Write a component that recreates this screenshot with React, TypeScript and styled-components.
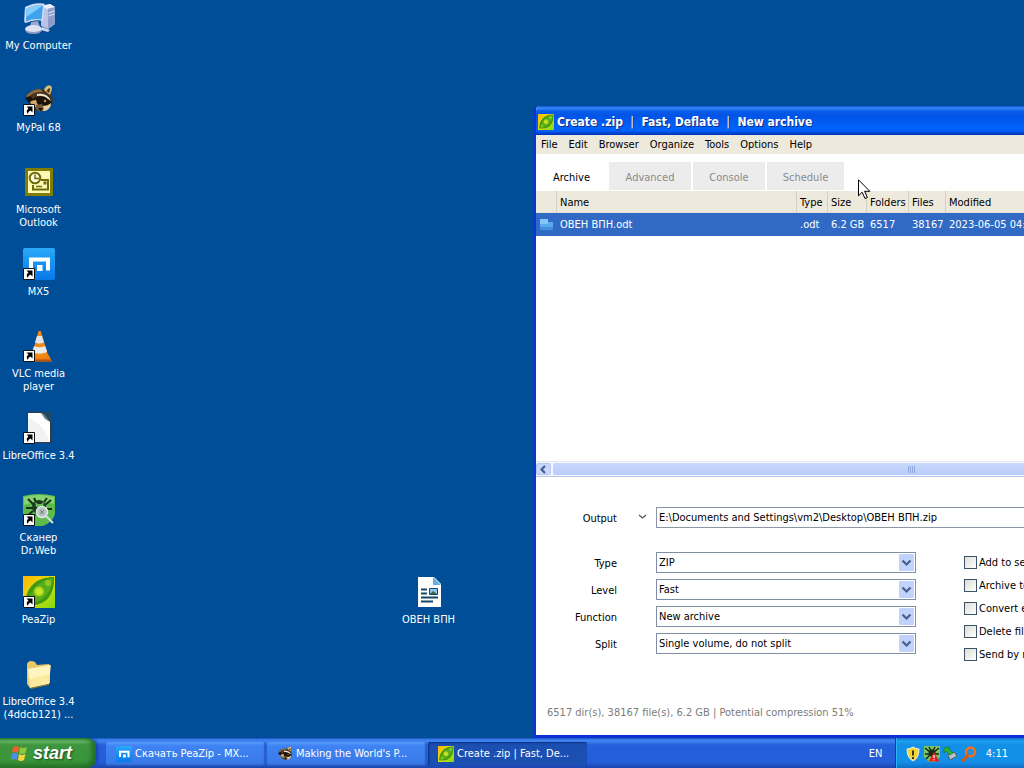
import React from "react";
import styled, { createGlobalStyle } from "styled-components";

const GlobalStyle = createGlobalStyle`
  * { box-sizing: border-box; }
  html, body { margin: 0; height: 100%; }
  body, button, input, select, table {
    font-family: "DejaVu Sans Condensed", "DejaVu Sans", sans-serif;
    font-size: 11px;
    line-height: 13px;
  }
`;

const Screen = styled.div`
  display: flex;
  flex-direction: column;
  height: 100vh;
  overflow: hidden;
  color: #000;
`;

const Desktop = styled.main`
  flex: 1;
  min-height: 0;
  position: relative;
  overflow: hidden;
  background: #004e98;
`;

const IconColumn = styled.div`
  display: grid;
  grid-auto-rows: 82px;
  width: 77px;
`;

const Shortcut = styled.button`
  display: flex;
  flex-direction: column;
  align-items: center;
  gap: 5px;
  width: 77px;
  padding: 2px 0 0;
  border: 0;
  background: none;
  color: #fff;
  white-space: nowrap;
  text-align: center;
  svg { display: block; flex: none; }
`;

const LooseFile = styled.div`
  position: absolute;
  left: 390px;
  top: 574px;
`;

const Window = styled.section`
  position: absolute;
  left: 534px;
  right: -264px;
  top: 106px;
  bottom: 0;
  display: flex;
  flex-direction: column;
  border: solid #0a32d4;
  border-width: 0 2px 3px;
  border-radius: 5px 5px 0 0;
  background: #fff;
  overflow: hidden;
`;

const TitleBar = styled.header`
  display: flex;
  align-items: center;
  gap: 3px;
  height: 29px;
  margin: 0 -2px;
  padding: 2px 0 0 4px;
  background: linear-gradient(#0a4fd0 0, #3a8cf8 2px, #0a5ce8 5px, #0054e6 10px, #0062fb 22px, #0060f8 25px, #0039c0 28px);
`;

const Title = styled.h1`
  margin: 0;
  padding-top: 1px;
  font-size: 12px;
  line-height: 16px;
  font-weight: bold;
  color: #fff;
  text-shadow: 1px 1px #0a2f8a;
  white-space: pre;
`;

const Divider = styled.span`
  padding: 0 4px;
  font-weight: normal;
`;

const MenuBar = styled.nav`
  display: flex;
  align-items: center;
  gap: 11px;
  height: 19px;
  padding-left: 5px;
  background: #ede9dc;
`;

const MenuItem = styled.button`
  padding: 0;
  border: 0;
  background: none;
  color: #000;
`;

const Tabs = styled.div`
  display: flex;
  align-items: flex-end;
  gap: 2px;
  height: 37px;
  padding-bottom: 1px;
`;

const Tab = styled.button<{ $width: number; $active?: boolean }>`
  width: ${(p) => p.$width}px;
  height: 28px;
  padding: 2px 0 0;
  border: 0;
  background: ${(p) => (p.$active ? "#fff" : "#ececed")};
  color: ${(p) => (p.$active ? "#000" : "#8a8a8a")};
`;

const FileList = styled.div`
  flex: 1;
  min-height: 0;
  overflow: hidden;
`;

const FileTable = styled.table`
  width: 100%;
  table-layout: fixed;
  border-collapse: separate;
  border-spacing: 0;
  text-align: left;
  white-space: nowrap;
  th {
    height: 22px;
    padding: 1px 0 0 3px;
    border-left: 1px solid #d3d0c2;
    border-bottom: 1px solid #e3dfcf;
    background: #ede9dc;
    font-weight: normal;
  }
  th:first-child { border-left: 0; }
  td {
    height: 23px;
    padding: 0 0 0 4px;
    background: #316ac5;
    color: #fff;
  }
  svg { display: block; }
`;

const ScrollBar = styled.div`
  display: flex;
  height: 16px;
  gap: 2px;
  padding: 1px 0;
  border-top: 1px solid #e4e9f4;
  border-bottom: 1px solid #b5c6e8;
  background: #f5f7fd;
`;

const ScrollArrow = styled.button`
  display: grid;
  place-items: center;
  width: 15px;
  padding: 0;
  border: 1px solid #b4c8f4;
  border-radius: 2px;
  background: #c8d6fb;
`;

const ScrollThumb = styled.div`
  display: flex;
  align-items: center;
  justify-content: center;
  gap: 1px;
  flex: 1;
  margin-right: 17px;
  border-radius: 2px;
  background: linear-gradient(#c9d8fd, #b9cdf8);
`;

const Grip = styled.i`
  width: 1px;
  height: 7px;
  background: #8fa8dc;
`;

const Options = styled.form`
  display: grid;
  grid-template-columns: 81px 39px 260px 1fr;
  grid-template-rows: 21px;
  row-gap: 24px;
  height: 229px;
  padding-top: 30px;
  align-content: start;
`;

const OutputLabel = styled.label`
  text-align: right;
  line-height: 23px;
`;

const PathMenu = styled.button`
  display: grid;
  place-items: center;
  padding: 0 0 2px 12px;
  border: 0;
  background: none;
`;

const PathInput = styled.input`
  grid-column: span 2;
  height: 21px;
  padding: 0 2px;
  border: 1px solid #8b97a4;
  background: #fff;
  color: #000;
`;

const Fields = styled.div`
  grid-column: 1 / span 3;
  display: flex;
  flex-direction: column;
  gap: 6px;
`;

const Field = styled.div`
  display: grid;
  grid-template-columns: 81px 260px;
  column-gap: 39px;
  height: 21px;
  label {
    text-align: right;
    line-height: 23px;
  }
`;

const SelectBox = styled.div`
  display: grid;
  align-items: center;
  height: 21px;
  border: 1px solid #7f8ea6;
  background: #fff;
  > * { grid-area: 1 / 1; }
  svg {
    justify-self: end;
    margin-right: 1px;
    pointer-events: none;
  }
`;

const Select = styled.select`
  appearance: none;
  height: 19px;
  padding: 0 20px 0 2px;
  border: 0;
  background: none;
  color: #000;
`;

const Checks = styled.div`
  display: flex;
  flex-direction: column;
  gap: 10px;
  padding: 4px 0 0 48px;
`;

const Check = styled.label`
  display: flex;
  align-items: center;
  gap: 2px;
  height: 13px;
  white-space: nowrap;
  input {
    appearance: none;
    flex: none;
    width: 13px;
    height: 13px;
    margin: 0;
    border: 1px solid #3d5368;
    background: linear-gradient(135deg, #dcdcd7, #fff);
  }
`;

const Status = styled.p`
  margin: 0;
  padding: 0 11px 15px;
  line-height: 14px;
  color: #7c7c7c;
`;

const Pointer = styled.svg`
  position: absolute;
  left: 858px;
  top: 179px;
`;

const TaskBar = styled.footer`
  display: flex;
  height: 30px;
  background: linear-gradient(#1c4fc0 0, #3f86f2 2px, #3a7cec 4px, #2560dc 7px, #245edb 24px, #1a45ad 30px);
  color: #fff;
`;

const StartButton = styled.button`
  display: flex;
  align-items: center;
  gap: 4px;
  width: 96px;
  padding: 0 0 0 10px;
  border: 0;
  border-radius: 0 9px 9px 0;
  background: linear-gradient(#2f7a35 0, #62b562 3px, #3e963e 7px, #3a963a 22px, #2a7a2c 30px);
  box-shadow: inset -4px -1px 5px #226a26, 2px 0 3px #1a44b4;
  color: #fff;
  font-family: "Liberation Sans", Arial, sans-serif;
  font-size: 18px;
  line-height: 20px;
  font-weight: bold;
  font-style: italic;
  text-shadow: 1px 1px 2px #17491a;
`;

const Tasks = styled.div`
  display: flex;
  align-items: center;
  gap: 2px;
  flex: 1;
  padding: 1px 0 0 10px;
`;

const Task = styled.button<{ $pressed?: boolean }>`
  display: flex;
  align-items: center;
  gap: 3px;
  width: 159px;
  height: 24px;
  padding: 0 10px;
  border: 0;
  border-radius: 2px;
  background: ${(p) =>
    p.$pressed ? "#1c4fb2" : "linear-gradient(#5b9bfb 0, #3e82f3 4px, #3a7bea 20px, #3069d2)"};
  box-shadow: ${(p) => (p.$pressed ? "inset 1px 1px 2px #0d3280" : "inset -1px -1px 1px #2a5cc0")};
  color: #fff;
  white-space: nowrap;
  svg { flex: none; }
`;

const Language = styled.button`
  width: 39px;
  padding: 0;
  border: 0;
  background: none;
  color: #fff;
`;

const Tray = styled.div`
  display: flex;
  align-items: center;
  gap: 3px;
  width: 129px;
  padding: 1px 16px 0 9px;
  border-left: 1px solid #0b3f9f;
  background: linear-gradient(#0d6fd0 0, #1fa0f0 3px, #1290e6 7px, #138fe8 24px, #0e6fc4 30px);
  box-shadow: inset 1px 0 #2bb3f6;
  svg { flex: none; }
  time { margin-left: auto; }
`;

const Arrow = () => (
  <g>
    <path d="M.5 20.500h11v11H.5z" fill="#fff" stroke="#111" />
    <path d="M3.500 22.500h6v6l-2-2c-2 1-2.500 2-2.500 3.500-2-2-1.500-4 .5-5.500z" fill="#000" />
  </g>
);

const Svg = ({ size = 32, box = 32, children }: { size?: number; box?: number; children: React.ReactNode }) => (
  <svg width={size} height={size} viewBox={`0 0 ${box} ${box}`} aria-hidden="true">
    {children}
  </svg>
);

const ComputerArt = () => (
  <>
    <path d="M18 4l9-2 5 3v17l-7 5-7-3z" fill="#b9c3e6" />
    <path d="M18 4l9-2 5 3-8 2z" fill="#eef1fb" />
    <path d="M25 7l7-2v17l-7 5z" fill="#8f9dcc" />
    <path d="M25.500 11l6-2M25.500 14l6-2" stroke="#dfe5f8" />
    <path d="M2 5Q11 0 20.500 1.500q1.500 0 1.300 1.500L20 19q-9-2-17 2-2 0-1.800-3z" fill="#d4daf0" />
    <path d="M3.500 6.500Q11 2.500 20 3.500L18.500 17.500Q10.500 16 3 19.500z" fill="#3ea2ef" />
    <path d="M3.500 6.500Q11 2.500 20 3.500L3.200 15z" fill="#86cdfb" />
    <path d="M8 20l7-1 2 6H7z" fill="#9ba6cf" />
    <ellipse cx="10.500" cy="27" rx="8.500" ry="4" fill="#dfe3f4" />
    <path d="M2 28q8 4 17 0-1 4-8.500 4T2 28z" fill="#8e99c4" />
    <path d="M19 25l8 3-2 2-7-2z" fill="#cfd5ec" />
  </>
);

const RaccoonArt = () => (
  <>
    <path d="M3 12C8 5 16 4 22 6c1-3 4-5 6-4 2 2 1 5 0 8 3 5 2 11-3 15-5 3-13 3-16-2z" fill="#4a3420" />
    <path d="M3 12q6-7 14-7l3 3Q9 7 5 14z" fill="#8a6b42" />
    <path d="M21 6c1-3 4-6 7-4 2 2 0 6-1 9z" fill="#d9bd7c" />
    <path d="M23.500 7q2-3 3.500-3 0 3-1 5z" fill="#4a3018" />
    <path d="M2 14l5-2 4 4-5 3z" fill="#1a130c" />
    <path d="M9 16q8-7 17-1l3 4q-4 4-9 2l-5 3z" fill="#1c150e" />
    <path d="M14 10q10-2 14 7l-3-2q-4-4-11-3z" fill="#f3ead2" />
    <path d="M7 18q3-3 6-1l2 4-4 3z" fill="#cfa768" />
    <path d="M20 22q5 0 8-3 0 6-6 8-4 0-5-3z" fill="#e8cf9c" />
    <path d="M13 21l6-1 2 5-4 3-4-3z" fill="#7b5a34" />
    <circle cx="12.500" cy="17" r="1" fill="#e9b35a" />
    <circle cx="22" cy="17" r="1.200" fill="#d99b45" />
    <path d="M15 24h5l-2.500 3.500z" fill="#111" />
  </>
);

const OutlookArt = () => (
  <>
    <path d="M2 2h28v28H2z" fill="#7f7c08" />
    <path d="M5 5h22v22H5z" fill="#fdf9b4" />
    <circle cx="12" cy="12" r="5.300" fill="#fffde0" stroke="#6f6b0a" strokeWidth="2" />
    <path d="M12 8.500V12.500h4" fill="none" stroke="#6f6b0a" strokeWidth="1.500" />
    <path d="M18 14h7v9.500H10V19" fill="none" stroke="#6f6b0a" strokeWidth="2" />
    <path d="M13 20.500h6" stroke="#6f6b0a" strokeWidth="1.500" />
    <path d="M20.500 15.500h3v3h-3z" fill="#6f6b0a" />
  </>
);

const MaxthonArt = () => (
  <>
    <defs>
      <linearGradient id="mx" x2="0" y2="1">
        <stop stopColor="#2aa9fa" />
        <stop offset="1" stopColor="#0878ea" />
      </linearGradient>
    </defs>
    <rect width="32" height="32" rx="2" fill="url(#mx)" />
    <path d="M8 22V11.500H25V22.500" fill="none" stroke="#fff" strokeWidth="4" />
    <path d="M14 17h5.500v6H14z" fill="#fff" />
  </>
);

const ConeArt = () => (
  <>
    <path d="M9 24l-5 7.500h25L25 24z" fill="#f07f12" />
    <path d="M4 31.500l1-2h23l1 2z" fill="#b5520a" />
    <path d="M15.500 1h2.200L25 25q-8 5-16 0z" fill="#f48a16" />
    <path d="M14 6h5l2 6.500q-5 2-9 0z" fill="#e3e5e8" />
    <path d="M11 16q5.500 2.500 11.200 0l2 6q-8 3.500-15 0z" fill="#e8eaee" />
  </>
);

const SheetArt = () => (
  <>
    <path d="M4 0h25v31H4z" fill="#343b42" />
    <path d="M5 1h13l9 9v20H5z" fill="#f2f2f3" />
    <path d="M5 1h13l9 9v20q-6-18-22-24z" fill="#fff" />
    <path d="M18 0h11v12z" fill="#24485f" />
    <path d="M18 1l3 1 6 8-5-3z" fill="#6d7f8b" />
  </>
);

const SpiderArt = () => (
  <>
    <path d="M0 2Q16-2 32 2v18q-2 8-12 12h-8Q2 28 0 20z" fill="#5dbb4c" />
    <path d="M1 3Q16-1 31 3v7q-14-5-30 1z" fill="#86d270" />
    <path d="M11 11L5 5M13 8l-2-4M21 8l3-4M22 11l6-5M10 14H3M10 17l-6 5M23 15h6M12 20l-2 5" stroke="#16301a" strokeWidth="2" fill="none" />
    <circle cx="16" cy="13" r="7" fill="#1b3a20" />
    <path d="M12 8l3 2h3l3-2-1 5h-7z" fill="#67b857" />
    <circle cx="19" cy="18" r="5.500" fill="#b4c3bd" stroke="#e3e9e8" strokeWidth="1.500" />
    <path d="M17 16l4 4M21 16l-4 4" stroke="#718078" />
    <path d="M23 22l7 7" stroke="#d7dce0" strokeWidth="2" />
  </>
);

const PeaArt = () => (
  <>
    <defs>
      <linearGradient id="pea" x2="1" y2="1">
        <stop stopColor="#ffb400" />
        <stop offset=".45" stopColor="#e6dc10" />
        <stop offset="1" stopColor="#7cdb10" />
      </linearGradient>
    </defs>
    <path d="M0 0h32v32H0z" fill="url(#pea)" />
    <path d="M2 29C3 10 14 1 31 1c1 17-8 29-23 28z" fill="#3f9a12" />
    <path d="M4 28C8 12 17 4 30 2 29 16 20 27 4 28z" fill="#5aad1a" />
    <circle cx="16" cy="15.500" r="5" fill="#a9d61c" />
    <circle cx="16" cy="15.500" r="3" fill="#cbe52a" />
    <circle cx="25" cy="7" r="3" fill="#93c822" />
    <circle cx="8" cy="24" r="3" fill="#86c01c" />
  </>
);

const FolderArt = () => (
  <>
    <path d="M4 7q0-4 5-4l3 1 2 3 12-1 1 2v17L7 30 4 26z" fill="#e8c968" />
    <path d="M5 11l22-4q1 0 .8 1L26 26 7 30z" fill="#fbeaa0" />
    <path d="M5 11l22-4-1 9L6 21z" fill="#fff5c0" />
    <path d="M7 30l19-4v1L8 31z" fill="#8d762b" />
  </>
);

const DocumentArt = () => (
  <>
    <path d="M5 1h16l7 7v23H5z" fill="#fff" />
    <path d="M20 1l8 8h-8z" fill="#66aee0" />
    <path d="M8 13.500h6M8 17.500h6M8 21.500h17M8 25.500h12" stroke="#174868" strokeWidth="2" />
    <path d="M16.500 12.500h8v6h-8z" fill="#8fc3e8" stroke="#174868" />
    <path d="M17 18l3-3 4 3z" fill="#2d6f49" />
  </>
);

const shortcuts = [
  { label: ["My Computer"], art: <ComputerArt /> },
  { label: ["MyPal 68"], art: <RaccoonArt />, link: true },
  { label: ["Microsoft", "Outlook"], art: <OutlookArt /> },
  { label: ["MX5"], art: <MaxthonArt />, link: true },
  { label: ["VLC media", "player"], art: <ConeArt />, link: true },
  { label: ["LibreOffice 3.4"], art: <SheetArt />, link: true },
  { label: ["Сканер", "Dr.Web"], art: <SpiderArt />, link: true },
  { label: ["PeaZip"], art: <PeaArt />, link: true },
  { label: ["LibreOffice 3.4", "(4ddcb121) ..."], art: <FolderArt /> },
];

const fields = [
  { id: "type", label: "Type", value: "ZIP" },
  { id: "level", label: "Level", value: "Fast" },
  { id: "function", label: "Function", value: "New archive" },
  { id: "split", label: "Split", value: "Single volume, do not split" },
];

const columns = [20, 240, 31, 39, 42, 37];

export default function App() {
  return (
    <Screen>
      <GlobalStyle />
      <Desktop>
        <IconColumn>
          {shortcuts.map((s, i) => (
            <Shortcut key={i}>
              <Svg>
                {s.art}
                {s.link && <Arrow />}
              </Svg>
              <span>
                {s.label.map((line, n) => (
                  <React.Fragment key={line}>
                    {n > 0 && <br />}
                    {line}
                  </React.Fragment>
                ))}
              </span>
            </Shortcut>
          ))}
        </IconColumn>
        <LooseFile>
          <Shortcut>
            <Svg><DocumentArt /></Svg>
            <span>ОВЕН ВПН</span>
          </Shortcut>
        </LooseFile>

        <Window>
          <TitleBar>
            <Svg size={16}><PeaArt /></Svg>
            <Title>
              Create .zip<Divider> | </Divider>Fast, Deflate<Divider> | </Divider>New archive
            </Title>
          </TitleBar>
          <MenuBar>
            {["File", "Edit", "Browser", "Organize", "Tools", "Options", "Help"].map((m) => (
              <MenuItem key={m}>{m}</MenuItem>
            ))}
          </MenuBar>
          <Tabs role="tablist">
            <Tab role="tab" $width={71} $active>Archive</Tab>
            <Tab role="tab" $width={82}>Advanced</Tab>
            <Tab role="tab" $width={72}>Console</Tab>
            <Tab role="tab" $width={77}>Schedule</Tab>
          </Tabs>
          <FileList>
            <FileTable>
              <colgroup>
                {columns.map((w, i) => <col key={i} width={w} />)}
                <col />
              </colgroup>
              <thead>
                <tr>
                  <th />
                  <th>Name</th>
                  <th>Type</th>
                  <th>Size</th>
                  <th>Folders</th>
                  <th>Files</th>
                  <th>Modified</th>
                </tr>
              </thead>
              <tbody>
                <tr>
                  <td>
                    <Svg size={14} box={14}>
                      <path d="M0 1h8v3h5v8H0z" fill="#5aa9ee" />
                      <path d="M0 1h8v5H0z" fill="#85c5fa" />
                      <path d="M0 9h13v3H0z" fill="#458fdf" />
                    </Svg>
                  </td>
                  <td>ОВЕН ВПН.odt</td>
                  <td>.odt</td>
                  <td>6.2 GB</td>
                  <td>6517</td>
                  <td>38167</td>
                  <td>2023-06-05 04:</td>
                </tr>
              </tbody>
            </FileTable>
          </FileList>
          <ScrollBar>
            <ScrollArrow aria-label="Scroll left">
              <Svg size={9} box={9}>
                <path d="M6 1L2.500 4.500 6 8" fill="none" stroke="#3f5a8c" strokeWidth="2" />
              </Svg>
            </ScrollArrow>
            <ScrollThumb><Grip /><Grip /><Grip /><Grip /></ScrollThumb>
          </ScrollBar>
          <Options onSubmit={(e) => e.preventDefault()}>
            <OutputLabel htmlFor="output">Output</OutputLabel>
            <PathMenu type="button" aria-label="Output path options">
              <Svg size={9} box={9}>
                <path d="M1 3l3.500 3L8 3" fill="none" stroke="#555" strokeWidth="1.300" />
              </Svg>
            </PathMenu>
            <PathInput id="output" defaultValue={"E:\\Documents and Settings\\vm2\\Desktop\\ОВЕН ВПН.zip"} />
            <Fields>
              {fields.map((f) => (
                <Field key={f.id}>
                  <label htmlFor={f.id}>{f.label}</label>
                  <SelectBox>
                    <Select id={f.id}>
                      <option>{f.value}</option>
                    </Select>
                    <svg width="15" height="17" viewBox="0 0 15 17" aria-hidden="true">
                      <rect width="15" height="17" rx="1" fill="#c2d3fb" />
                      <path d="M3.500 6.500l4 4 4-4" fill="none" stroke="#465f90" strokeWidth="2.200" />
                    </svg>
                  </SelectBox>
                </Field>
              ))}
            </Fields>
            <Checks>
              {["Add to se", "Archive to", "Convert e", "Delete file", "Send by m"].map((c) => (
                <Check key={c}>
                  <input type="checkbox" />
                  {c}
                </Check>
              ))}
            </Checks>
          </Options>
          <Status>6517 dir(s), 38167 file(s), 6.2 GB | Potential compression 51%</Status>
        </Window>
        <Pointer width="13" height="21" viewBox="0 0 13 21" aria-hidden="true">
          <path d="M.5.8v16l3.700-3.600 2.800 6.300 2.400-1-2.800-6.200h5.300z" fill="#fff" stroke="#000" />
        </Pointer>
      </Desktop>

      <TaskBar>
        <StartButton>
          <Svg size={19} box={19}>
            <path d="M3 3q3-2 6 0L8 9Q5 7 2 9z" fill="#f0602c" />
            <path d="M10 3q3 2 7 0l-1.500 6q-3 2-6.500 0z" fill="#8ac83c" />
            <path d="M2 10q3-2 6 0l-1 6q-3-2-6 0z" fill="#4d8ff0" />
            <path d="M9 10q3 2 6.500 0L14 16q-3 2-6 0z" fill="#fcd13a" />
          </Svg>
          start
        </StartButton>
        <Tasks>
          <Task>
            <Svg size={16}><MaxthonArt /></Svg>
            Скачать PeaZip - MX...
          </Task>
          <Task>
            <Svg size={16}><RaccoonArt /></Svg>
            Making the World's P...
          </Task>
          <Task $pressed>
            <Svg size={16}><PeaArt /></Svg>
            Create .zip | Fast, De...
          </Task>
        </Tasks>
        <Language>EN</Language>
        <Tray>
          <Svg size={16} box={16}>
            <path d="M8 1q3 2 6 2 0 9-6 12Q2 12 2 3q3 0 6-2z" fill="#f6d433" stroke="#efefe0" />
            <path d="M8 4.500v5" stroke="#333" strokeWidth="2" />
            <path d="M7 11h2v2H7z" fill="#333" />
          </Svg>
          <Svg size={16} box={16}>
            <path d="M0 0h16v11l-5 5H5l-5-5z" fill="#7cc562" />
            <path d="M1 2l5 4M15 2l-5 4M5 1l2 4M11 1L9 5M1 8h5M15 8h-5M2 13l4-4" stroke="#142414" strokeWidth="1.500" />
            <circle cx="8" cy="7" r="3.500" fill="#182a18" />
            <path d="M10 6l5.500 9.500H4.500z" fill="#e2231f" />
            <path d="M10 9v3M10 13.200v1" stroke="#fff" strokeWidth="1.300" />
          </Svg>
          <Svg size={15} box={15}>
            <path d="M5 9l6-3 3 4-7 4z" fill="#b9c2c4" stroke="#50606a" />
            <path d="M1 2l6-1-1 2 4 4-3 2-4-4-2 2z" fill="#2fae3b" stroke="#176d22" strokeWidth=".6" />
          </Svg>
          <Svg size={16} box={16}>
            <circle cx="9.500" cy="6" r="4.500" fill="#2a8cd8" stroke="#f0701c" strokeWidth="2.600" />
            <path d="M6.500 9.500L2 14.500" stroke="#d85a14" strokeWidth="3" strokeLinecap="round" />
          </Svg>
          <time>4:11</time>
        </Tray>
      </TaskBar>
    </Screen>
  );
}
